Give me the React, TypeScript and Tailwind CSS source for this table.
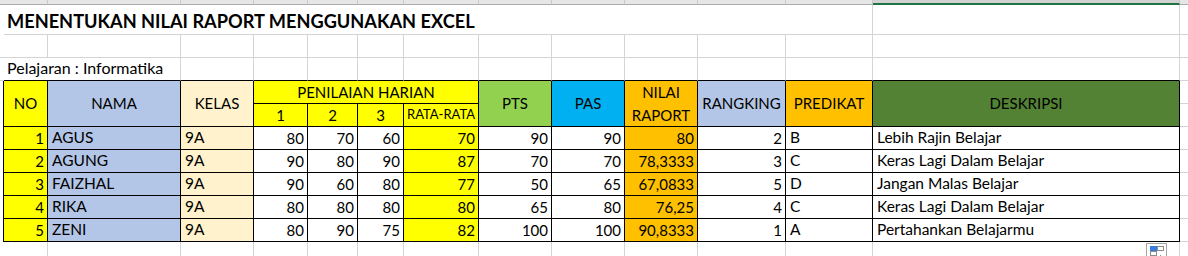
import React from 'react';

type Row = [number, string, string, number, number, number, number, number, number, string, number, string, string];

const rows: Row[] = [
  [1, 'AGUS', '9A', 80, 70, 60, 70, 90, 90, '80', 2, 'B', 'Lebih Rajin Belajar'],
  [2, 'AGUNG', '9A', 90, 80, 90, 87, 70, 70, '78,3333', 3, 'C', 'Keras Lagi Dalam Belajar'],
  [3, 'FAIZHAL', '9A', 90, 60, 80, 77, 50, 65, '67,0833', 5, 'D', 'Jangan Malas Belajar'],
  [4, 'RIKA', '9A', 80, 80, 80, 80, 65, 80, '76,25', 4, 'C', 'Keras Lagi Dalam Belajar'],
  [5, 'ZENI', '9A', 80, 90, 75, 82, 100, 100, '90,8333', 1, 'A', 'Pertahankan Belajarmu'],
];

// black-bordered table cell
const tc = 'flex items-center whitespace-nowrap overflow-hidden border-r border-b border-black';
const num = `${tc} justify-end pr-[3px]`;
const txt = `${tc} justify-start pl-[4px] text-[15.5px]`;
const head = `${tc} justify-center text-center`;

// plain sheet gridline cell
const gc = 'border-r border-b border-[#D4D4D4]';

function QuickAnalysis() {
  return (
    <svg width="21" height="21" viewBox="0 0 21 21" className="absolute left-[1146px] top-[243px]">
      <rect x="0.5" y="0.5" width="20" height="20" fill="#fff" stroke="#A6A6A6" />
      <rect x="4" y="3" width="7" height="5" fill="#3B7DDD" />
      <rect x="11.5" y="3.5" width="6" height="4" fill="none" stroke="#8C8C8C" />
      <rect x="4.5" y="8.5" width="6" height="4" fill="none" stroke="#8C8C8C" />
      <rect x="14" y="12" width="1" height="2" fill="#8C8C8C" />
    </svg>
  );
}

export default function App() {
  const strip = 'bg-[#E6E6E6] border-r border-b border-r-[#C8C8C8] border-b-[#ABABAB]';
  return (
    <div className="relative w-[1188px] h-[256px] overflow-hidden bg-white text-black [font-family:Lato,'Liberation_Sans',sans-serif] text-[15px]">
      <div className="grid grid-cols-[4px_44px_133px_73px_54px_50px_46px_75px_73px_73px_73px_88px_87px_307px_8px] grid-rows-[5px_30px_23px_23px_23px_23px_23px_23px_23px_23px_23px_14px]">
        {/* column header strip */}
        <div className="bg-[#E6E6E6] border-b border-[#ABABAB]" />
        {Array.from({ length: 12 }).map((_, i) => (
          <div key={`s${i}`} className={strip} />
        ))}
        <div className="bg-[#D2D2D2] border-r border-r-[#C8C8C8] border-b-2 border-b-[#217346]" />
        <div className="bg-[#E6E6E6] border-b border-[#ABABAB]" />

        {/* title */}
        <div />
        <div className={`col-span-12 flex items-end pl-[3px] pb-[4px] ${gc}`}>
          <span className="text-[18.2px] font-bold leading-none whitespace-nowrap">MENENTUKAN NILAI RAPORT MENGGUNAKAN EXCEL</span>
        </div>
        <div className={gc} />
        <div className="border-b border-[#D4D4D4]" />

        {/* empty row */}
        <div className="border-b border-[#D4D4D4]" />
        {Array.from({ length: 13 }).map((_, i) => (
          <div key={`e${i}`} className={gc} />
        ))}
        <div className="border-b border-[#D4D4D4]" />

        {/* pelajaran */}
        <div className="border-b border-[#D4D4D4]" />
        <div className="col-span-2 flex items-end pl-[3px] pb-[4px] border-r border-r-[#D4D4D4] border-b border-b-black">
          <span className="text-[16px] leading-none whitespace-nowrap">Pelajaran : Informatika</span>
        </div>
        {Array.from({ length: 11 }).map((_, i) => (
          <div key={`p${i}`} className="border-r border-r-[#D4D4D4] border-b border-b-black" />
        ))}
        <div className="border-b border-[#D4D4D4]" />

        {/* header row 1 */}
        <div className="border-r border-black" />
        <div className={`${head} row-span-2 bg-[#FFFF00]`}>NO</div>
        <div className={`${head} row-span-2 bg-[#B4C6E7]`}>NAMA</div>
        <div className={`${head} row-span-2 bg-[#FFF2CC]`}>KELAS</div>
        <div className={`${head} col-span-4 bg-[#FFFF00]`}>PENILAIAN HARIAN</div>
        <div className={`${head} row-span-2 bg-[#92D050]`}>PTS</div>
        <div className={`${head} row-span-2 bg-[#00B0F0]`}>PAS</div>
        <div className={`${head} row-span-2 bg-[#FFC000] leading-[23px]`}>
          NILAI
          <br />
          RAPORT
        </div>
        <div className={`${head} row-span-2 bg-[#B4C6E7]`}>RANGKING</div>
        <div className={`${head} row-span-2 bg-[#FFC000]`}>PREDIKAT</div>
        <div className={`${head} row-span-2 bg-[#548235]`}>DESKRIPSI</div>
        <div className="border-b border-[#D4D4D4]" />

        {/* header row 2 */}
        <div className="border-r border-black" />
        <div className={`${head} bg-[#FFFF00]`}>1</div>
        <div className={`${head} bg-[#FFFF00]`}>2</div>
        <div className={`${head} bg-[#FFFF00]`}>3</div>
        <div className={`${head} bg-[#FFFF00] text-[13px]`}>RATA-RATA</div>
        <div className="border-b border-[#D4D4D4]" />

        {/* data */}
        {rows.map((r) => (
          <React.Fragment key={r[0]}>
            <div className="border-r border-black" />
            <div className={`${num} bg-[#FFFF00]`}>{r[0]}</div>
            <div className={`${txt} bg-[#B4C6E7]`}>{r[1]}</div>
            <div className={`${txt} bg-[#FFF2CC]`}>{r[2]}</div>
            <div className={num}>{r[3]}</div>
            <div className={num}>{r[4]}</div>
            <div className={num}>{r[5]}</div>
            <div className={`${num} bg-[#FFFF00]`}>{r[6]}</div>
            <div className={num}>{r[7]}</div>
            <div className={num}>{r[8]}</div>
            <div className={`${num} bg-[#FFC000]`}>{r[9]}</div>
            <div className={num}>{r[10]}</div>
            <div className={txt}>{r[11]}</div>
            <div className={txt}>{r[12]}</div>
            <div className="border-b border-[#D4D4D4]" />
          </React.Fragment>
        ))}

        {/* last partial row */}
        <div />
        {Array.from({ length: 13 }).map((_, i) => (
          <div key={`l${i}`} className="border-r border-[#D4D4D4]" />
        ))}
        <div />
      </div>
      <QuickAnalysis />
    </div>
  );
}
